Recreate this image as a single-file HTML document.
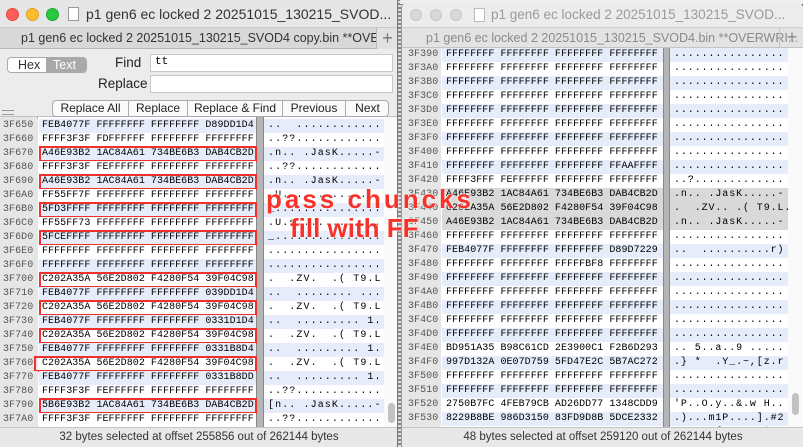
<!DOCTYPE html><html><head><meta charset="utf-8"><style>
*{margin:0;padding:0;box-sizing:border-box}
body{width:803px;height:447px;overflow:hidden;background:#6d6d6d;font-family:"Liberation Sans",sans-serif;position:relative}
.abs{position:absolute}
.mono{font-family:"Liberation Mono",monospace;font-size:10px;letter-spacing:0.05px;white-space:pre;line-height:14px}
.b{background:#e7ecfb}.w{background:#fff}.s{background:#d9d9d9}
.box{position:absolute;border:2px solid #f0302a;height:16px}
.btn{position:absolute;top:0;height:16px;border-right:1px solid #aaa;font-size:12px;line-height:15px;text-align:center;color:#222}
.red{position:absolute;font-weight:bold;font-family:'Liberation Sans',sans-serif;color:#f5332b;text-shadow:0 0 2px #fff,0 0 2px #fff;white-space:nowrap}
</style></head><body>
<div class="abs" style="left:380px;top:0;width:30px;height:447px;background:repeating-linear-gradient(0deg,#ddd 0 2px,#888 2px 4px)"></div>
<div class="abs" style="left:400px;top:0;width:403px;height:4px;background:#eee"></div>

<!-- RIGHT WINDOW -->
<div class="abs" style="left:401px;top:3px;width:402px;height:444px;background:#fff;border-radius:5px 5px 0 0;overflow:hidden;border-left:1px solid #999">
 <div class="abs" style="left:0;top:0;width:402px;height:25px;background:#ececec;border-bottom:1px solid #d0d0d0">
  <div class="abs" style="left:8px;top:6px;width:12px;height:12px;border-radius:6px;background:#d8d8d8;border:1px solid #c8c8c8"></div>
  <div class="abs" style="left:28px;top:6px;width:12px;height:12px;border-radius:6px;background:#d8d8d8;border:1px solid #c8c8c8"></div>
  <div class="abs" style="left:48px;top:6px;width:12px;height:12px;border-radius:6px;background:#d8d8d8;border:1px solid #c8c8c8"></div>
  <div class="abs" style="left:72px;top:5px;width:11px;height:14px;border:1px solid #bbb;background:#fff"></div>
  <div class="abs" style="left:89px;top:4px;font-size:13.5px;color:#9a9a9a">p1 gen6 ec locked 2 20251015_130215_SVOD...</div>
 </div>
 <div class="abs" style="left:0;top:25px;width:402px;height:20px;background:#e3e3e3;border-bottom:1px solid #c4c4c4">
  <div class="abs" style="left:24px;top:3px;font-size:12.5px;color:#8a8a8a">p1 gen6 ec locked 2 20251015_130215_SVOD4.bin **OVERWRI...</div>
  <div class="abs" style="left:377px;top:0;width:25px;height:20px;border-left:1px solid #c4c4c4;color:#888;font-size:18px;text-align:center;line-height:19px">+</div>
 </div>
 <div class="abs" style="left:0;top:45px;width:39px;height:380px;background:#e6e6e6;border-right:1px solid #bbb"></div>
 <div class="abs" style="left:261px;top:45px;width:7px;height:380px;background:#b5b5b5;border-left:1px solid #888;border-right:1px solid #888"></div>
 <div class="abs" style="left:386px;top:45px;width:16px;height:380px;background:#fafafa"></div>
 <div class="abs" style="left:390px;top:390px;width:7px;height:22px;border-radius:4px;background:#c2c2c2"></div>
 <div id="R" class="abs mono" style="left:0;top:45px;width:402px;height:380px;overflow:hidden"></div>
 <div class="abs" style="left:0;top:424px;width:402px;height:20px;background:#e8e8e8;border-top:1px solid #c4c4c4;font-size:11.5px;color:#333;text-align:center;line-height:19px">48 bytes selected at offset 259120 out of 262144 bytes</div>
</div>

<!-- LEFT WINDOW -->
<div class="abs" style="left:0;top:0;width:398px;height:447px;background:#fff;border-right:1px solid #777;overflow:hidden">
 <div class="abs" style="left:0;top:0;width:398px;height:28px;background:#e6e6e6;border-bottom:1px solid #c8c8c8">
  <div class="abs" style="left:6px;top:8px;width:13px;height:13px;border-radius:7px;background:#fc5f57;border:1px solid #df4a42"></div>
  <div class="abs" style="left:26px;top:8px;width:13px;height:13px;border-radius:7px;background:#fdbc2e;border:1px solid #de9f22"></div>
  <div class="abs" style="left:46px;top:8px;width:13px;height:13px;border-radius:7px;background:#28c840;border:1px solid #1fa631"></div>
  <div class="abs" style="left:68px;top:7px;width:11px;height:14px;border:1px solid #999;background:#fff"></div>
  <div class="abs" style="left:86px;top:6px;font-size:14px;color:#333">p1 gen6 ec locked 2 20251015_130215_SVOD...</div>
 </div>
 <div class="abs" style="left:0;top:28px;width:398px;height:21px;background:#d8d8d8;border-bottom:1px solid #b8b8b8">
  <div class="abs" style="left:21px;top:3px;font-size:12.5px;color:#333">p1 gen6 ec locked 2 20251015_130215_SVOD4 copy.bin **OVE...</div>
  <div class="abs" style="left:376px;top:0;width:22px;height:21px;border-left:1px solid #b8b8b8;background:#e2e2e2;color:#777;font-size:18px;text-align:center;line-height:20px">+</div>
 </div>
 <div class="abs" style="left:0;top:49px;width:398px;height:68px;background:#ececec;border-bottom:1px solid #c0c0c0">
  <div class="abs" style="left:7px;top:8px;width:80px;height:16px;border:1px solid #aaa;border-radius:4px;background:#fff;overflow:hidden;font-size:12.5px;line-height:14px">
   <span class="abs" style="left:10px;top:0;color:#333">Hex</span>
   <span class="abs" style="left:38px;top:0;width:42px;height:16px;background:#a9a9a9;color:#fff;padding-left:7px">Text</span>
  </div>
  <div class="abs" style="left:115px;top:6px;font-size:13.5px;color:#222">Find</div>
  <div class="abs" style="left:150px;top:5px;width:243px;height:18px;background:#fff;border:1px solid #c8c8c8;font-family:'Liberation Mono',monospace;font-size:11px;padding:1px 4px">tt</div>
  <div class="abs" style="left:98px;top:27px;font-size:13.5px;color:#222">Replace</div>
  <div class="abs" style="left:150px;top:26px;width:243px;height:18px;background:#fff;border:1px solid #c8c8c8"></div>
  <div class="abs" style="left:52px;top:51px;width:337px;height:17px;border:1px solid #aaa;border-radius:4px;background:#fafafa;overflow:hidden">
   <div class="btn" style="left:0;width:76px">Replace All</div>
   <div class="btn" style="left:76px;width:59px">Replace</div>
   <div class="btn" style="left:135px;width:95px">Replace &amp; Find</div>
   <div class="btn" style="left:230px;width:63px">Previous</div>
   <div class="btn" style="left:293px;width:43px;border:none">Next</div>
  </div>
  <div class="abs" style="left:2px;top:61px;width:12px;height:5px;border-top:1px solid #999;border-bottom:1px solid #999"></div>
 </div>
 <div class="abs" style="left:0;top:117px;width:38px;height:311px;background:#e6e6e6;border-right:1px solid #aaa"></div>
 <div class="abs" style="left:256px;top:117px;width:8px;height:311px;background:#b5b5b5;border-left:1px solid #888;border-right:1px solid #888"></div>
 <div class="abs" style="left:384px;top:117px;width:14px;height:311px;background:#fafafa"></div>
 <div class="abs" style="left:388px;top:403px;width:7px;height:20px;border-radius:4px;background:#c2c2c2"></div>
 <div id="L" class="abs mono" style="left:0;top:117px;width:398px;height:311px;overflow:hidden"></div>
 <div class="abs" style="left:0;top:427px;width:398px;height:20px;background:#e8e8e8;border-top:1px solid #c4c4c4;font-size:11.5px;color:#333;text-align:center;line-height:19px">32 bytes selected at offset 255856 out of 262144 bytes</div>
</div>

<div class="red" style="left:266px;top:184px;font-size:26px;letter-spacing:3px">pass chuncks</div>
<div class="red" style="left:290px;top:213px;font-size:26px;letter-spacing:0px">fill with FF</div>

<script>
var F='FFFFFFFF FFFFFFFF FFFFFFFF FFFFFFFF',D='................';
var L=[
['3F650','FEB4077F FFFFFFFF FFFFFFFF D89DD1D4','..  ............'],
['3F660','FFFF3F3F FDFFFFFF FFFFFFFF FFFFFFFF','..??............'],
['3F670','A46E93B2 1AC84A61 734BE6B3 DAB4CB2D','.n.. .JasK.....-',1],
['3F680','FFFF3F3F FEFFFFFF FFFFFFFF FFFFFFFF','..??............'],
['3F690','A46E93B2 1AC84A61 734BE6B3 DAB4CB2D','.n.. .JasK.....-',1],
['3F6A0','FF55FF7F FFFFFFFF FFFFFFFF FFFFFFFF','.U..............'],
['3F6B0','5FD3FFFF FFFFFFFF FFFFFFFF FFFFFFFF','_...............',1],
['3F6C0','FF55FF73 FFFFFFFF FFFFFFFF FFFFFFFF','.U.s............'],
['3F6D0','5FCEFFFF FFFFFFFF FFFFFFFF FFFFFFFF','_...............',1],
['3F6E0',F,D],['3F6F0',F,D],
['3F700','C202A35A 56E2D802 F4280F54 39F04C98','.  .ZV.  .( T9.L.',1],
['3F710','FEB4077F FFFFFFFF FFFFFFFF 039DD1D4','..  ........ ...'],
['3F720','C202A35A 56E2D802 F4280F54 39F04C98','.  .ZV.  .( T9.L.',1],
['3F730','FEB4077F FFFFFFFF FFFFFFFF 0331D1D4','..  ......... 1..'],
['3F740','C202A35A 56E2D802 F4280F54 39F04C98','.  .ZV.  .( T9.L.',1],
['3F750','FEB4077F FFFFFFFF FFFFFFFF 0331B8D4','..  ......... 1..'],
['3F760','C202A35A 56E2D802 F4280F54 39F04C98','.  .ZV.  .( T9.L.',2],
['3F770','FEB4077F FFFFFFFF FFFFFFFF 0331B8DD','..  ......... 1..'],
['3F780','FFFF3F3F FEFFFFFF FFFFFFFF FFFFFFFF','..??............'],
['3F790','5B6E93B2 1AC84A61 734BE6B3 DAB4CB2D','[n.. .JasK.....-',1],
['3F7A0','FFFF3F3F FEFFFFFF FFFFFFFF FFFFFFFF','..??............'],
['3F7B0',F,D]];
var R=[];
['3F390','3F3A0','3F3B0','3F3C0','3F3D0','3F3E0','3F3F0','3F400'].forEach(a=>R.push([a,F,D]));
R.push(['3F410','FFFFFFFF FFFFFFFF FFFFFFFF FFAAFFFF',D]);
R.push(['3F420','FFFF3FFF FEFFFFFF FFFFFFFF FFFFFFFF','..?.............']);
R.push(['3F430','A46E93B2 1AC84A61 734BE6B3 DAB4CB2D','.n.. .JasK.....-',1]);
R.push(['3F440','C202A35A 56E2D802 F4280F54 39F04C98','.  .ZV.. .( T9.L.',1]);
R.push(['3F450','A46E93B2 1AC84A61 734BE6B3 DAB4CB2D','.n.. .JasK.....-',1]);
R.push(['3F460',F,D]);
R.push(['3F470','FEB4077F FFFFFFFF FFFFFFFF D89D7229','..  ..........r)']);
R.push(['3F480','FFFFFFFF FFFFFFFF FFFFFBF8 FFFFFFFF',D]);
['3F490','3F4A0','3F4B0','3F4C0','3F4D0'].forEach(a=>R.push([a,F,D]));
R.push(['3F4E0','BD951A35 B98C61CD 2E3900C1 F2B6D293','.. 5..a..9 .....']);
R.push(['3F4F0','997D132A 0E07D759 5FD47E2C 5B7AC272','.} *  .Y_.~,[z.r']);
R.push(['3F500',F,D]);R.push(['3F510',F,D]);
R.push(['3F520','2750B7FC 4FEB79CB AD26DD77 1348CDD9',"'P..O.y..&.w H.."]);
R.push(['3F530','8229B8BE 986D3150 83FD9D8B 5DCE2332','.)...m1P....].#2']);
R.push(['3F540','B1FFFFED 160607DD 0000FFF1 FF0AE404','......{.....W*..']);
function build(el,rows,top,o){var h='';rows.forEach((r,i)=>{var y=top+i*14,c=i%2==0?'b':'w';
 h+='<div class="abs" style="left:0;top:'+y+'px;width:'+o.aw+'px;height:14px;background:#e6e6e6;color:#555;padding-left:'+o.ax+'px">'+r[0]+'</div>';
 h+='<div class="abs '+(o.sel&&r[3]?'s':c)+'" style="left:'+o.hl+'px;top:'+y+'px;width:'+o.hw+'px;height:14px;padding-left:'+o.hp+'px;color:#000">'+r[1]+'</div>';
 h+='<div class="abs '+(o.sel&&r[3]?'s':c)+'" style="left:'+o.al+'px;top:'+y+'px;width:'+o.alw+'px;height:14px;padding-left:4px;color:#000;letter-spacing:'+o.ls+'px;overflow:hidden">'+r[2].replace(/</g,'&lt;')+'</div>';
 if(!o.sel&&r[3]){var x=r[3]==2?34:39;h+='<div class="box" style="left:'+x+'px;top:'+(y-1)+'px;width:'+(257-x)+'px"></div>';}
});document.getElementById(el).innerHTML=h;}
build('L',L,2,{aw:38,ax:3,hl:39,hw:217,hp:3,al:264,alw:120,sel:0,ls:1.1});
build('R',R,0,{aw:39,ax:6,hl:40,hw:221,hp:4,al:268,alw:118,sel:1,ls:0.9});
</script>
</body></html>
